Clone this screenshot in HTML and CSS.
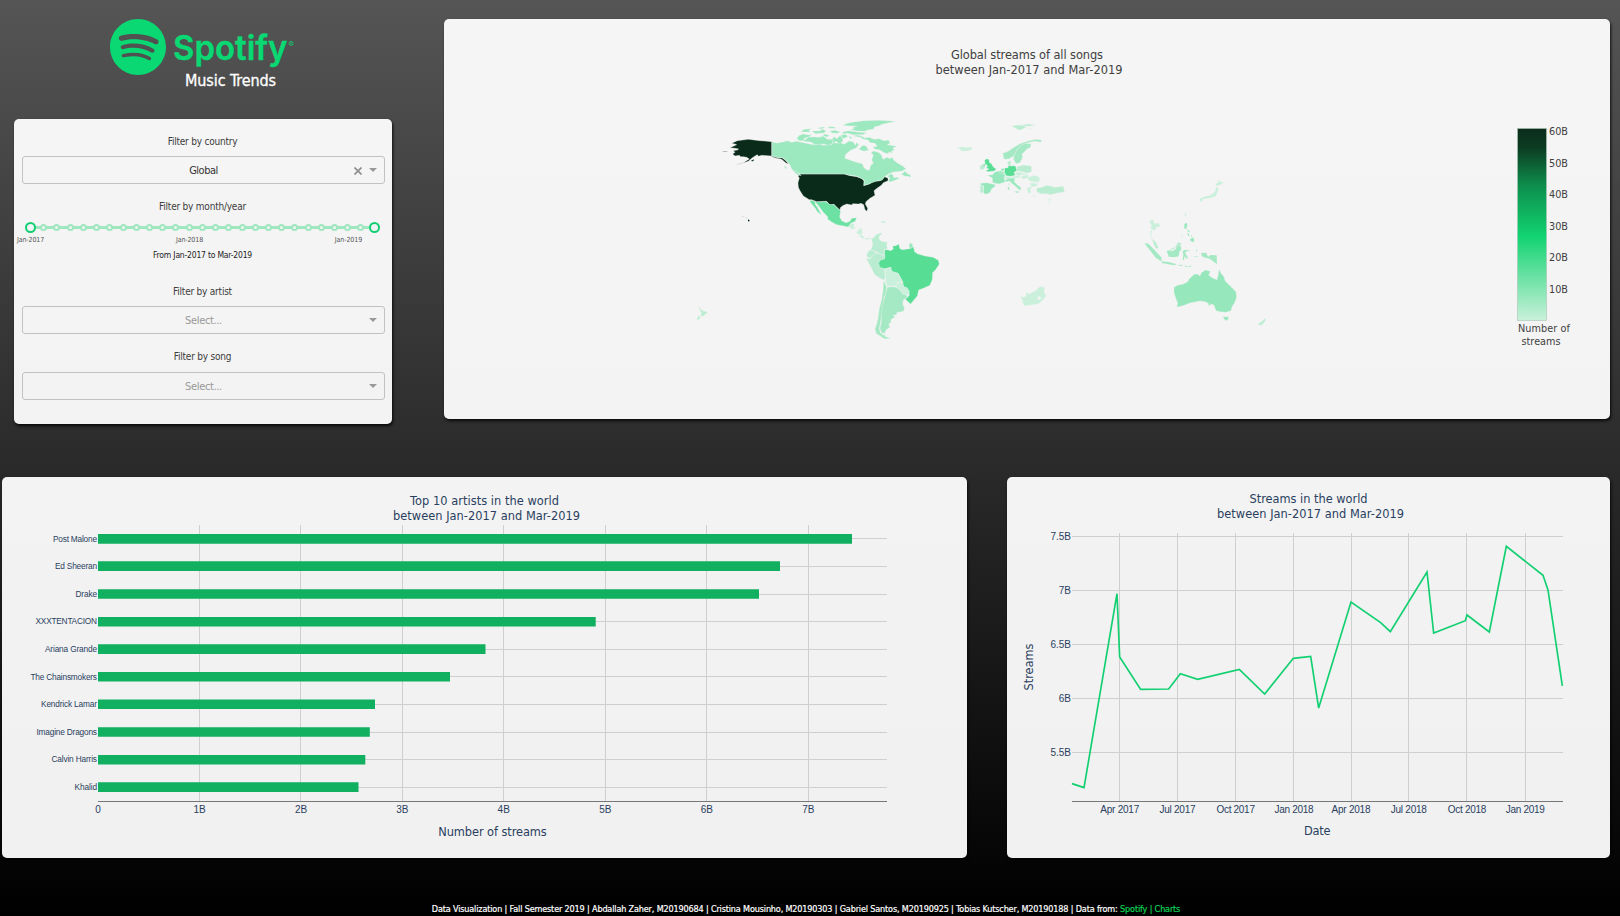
FILE: index.html
```html
<!DOCTYPE html>
<html lang="en">
<head>
<meta charset="utf-8">
<title>Spotify Music Trends</title>
<link rel="stylesheet" href="styles.css">
</head>
<body>
<div class="page">
  <div class="top">
    <aside class="side">
      <header class="brand">
        <svg class="logo" viewBox="110 19 190 56" width="190" height="56">
          <path class="green" transform="translate(110 19) scale(2.3333)" d="M12 0C5.4 0 0 5.4 0 12s5.4 12 12 12 12-5.4 12-12S18.66 0 12 0zm5.521 17.34c-.24.359-.66.48-1.021.24-2.82-1.74-6.36-2.101-10.561-1.141-.418.122-.779-.179-.899-.539-.12-.421.18-.78.54-.9 4.56-1.021 8.52-.6 11.64 1.32.42.18.479.659.301 1.02zm1.44-3.3c-.301.42-.841.6-1.262.3-3.239-1.98-8.159-2.58-11.939-1.38-.479.12-1.02-.12-1.14-.6-.12-.48.12-1.021.6-1.141C9.6 9.9 15 10.561 18.72 12.84c.361.181.54.78.241 1.2zm.12-3.36C15.24 8.4 8.82 8.16 5.16 9.301c-.6.179-1.2-.181-1.38-.721-.18-.601.18-1.2.72-1.381 4.26-1.26 11.28-1.02 15.721 1.621.539.3.719 1.02.419 1.56-.299.421-1.02.599-1.559.3z"/>
          <text class="wordmark" x="173" y="59.6" textLength="114.5" lengthAdjust="spacingAndGlyphs">Spotify</text>
          <text class="reg" x="288.5" y="46.5">®</text>
        </svg>
        <h1 class="subtitle">Music Trends</h1>
      </header>
      <section class="panel filters">
        <label class="label">Filter by country</label>
        <div class="select"><span class="value">Global</span>
          <svg class="clear" viewBox="0 0 8 8" width="8" height="8"><path d="M.5.5l7 7M7.5.5l-7 7"/></svg>
          <i class="caret"></i></div>
        <label class="label month">Filter by month/year</label>
        <div class="slider">
          <div class="rail"></div>
          <div class="dots"><i class="end"></i><i></i><i></i><i></i><i></i><i></i><i></i><i></i><i></i><i></i><i></i><i></i><i></i><i></i><i></i><i></i><i></i><i></i><i></i><i></i><i></i><i></i><i></i><i></i><i></i><i></i><i class="end"></i></div>
          <div class="marks"><span>Jan-2017</span><span>Jan-2018</span><span>Jan-2019</span></div>
        </div>
        <p class="range">From Jan-2017 to Mar-2019</p>
        <label class="label artist">Filter by artist</label>
        <div class="select"><span class="value empty">Select...</span><i class="caret"></i></div>
        <label class="label song">Filter by song</label>
        <div class="select"><span class="value empty">Select...</span><i class="caret"></i></div>
      </section>
    </aside>

    <section class="panel map">
      <svg viewBox="444 19 1166 400" width="1166" height="400">
        <defs><linearGradient id="scale" x1="0" y1="1" x2="0" y2="0">
          <stop offset="0" stop-color="#c9f1da"/><stop offset=".44" stop-color="#11d371"/><stop offset=".7" stop-color="#0d8f4d"/><stop offset=".9" stop-color="#0c3c22"/><stop offset="1" stop-color="#0b2c1a"/>
        </linearGradient></defs>
        <g class="title dark">
          <text x="1027" y="59" textLength="152">Global streams of all songs</text>
          <text x="1029" y="74" textLength="187">between Jan-2017 and Mar-2019</text>
        </g>
        <g class="land" transform="translate(680 100) scale(.33333)">
          <path class="c9" d="M275,125L240,122 222,120 205,118 188,120 172,122 155,130 165,132 170,134 160,139 150,143 165,145 176,147 172,150 160,152 165,157 158,162 165,168 178,166 182,170 190,170 200,172 208,177 190,188 163,196 182,191 205,184 215,175 225,168 232,164 236,169 245,166 275,168 290,172 298,174 306,173 316,181 326,192 318,189 305,178 290,175 275,170Z"/>
          <path class="c9 islet" d="M128,153.5h14v1.2h-14zM212,183l10,-5 -2,6zM204,358l5,3 -2,4 -3,-2zM187,349l3,1 -1,1zM196,353l4,1 -1,1z"/>
          <path class="c9" d="M357,226L362,222 493,222 510,227 530,230 546,236 552,243 551,257 568,252 580,244 596,243 606,240 614,230 624,235 624,242 610,248 604,256 592,264 582,272 585,286 570,295 558,305 556,312 563,325 561,334 555,329 551,314 543,310 536,312 518,311 516,315 500,312 488,317 481,323 480,331 470,321 462,313 450,315 440,304 410,305 395,299 388,299 370,288 360,272 355,262 354,248 358,234 354,228Z"/>
          <path class="c4" d="M276,125L290,129 308,126 322,122 335,127 350,124 370,128 385,131 400,134 420,132 430,136 455,133 462,127 470,130 480,127 492,133 508,123 520,126 526,136 530,127 536,135 528,145 515,149 505,156 496,165 495,175 508,179 520,184 530,187 547,191 552,203 562,211 568,210 572,196 580,190 575,180 580,166 573,157 582,153 598,158 604,165 609,178 622,172 630,176 636,171 643,182 654,190 668,198 678,207 665,214 640,216 626,222 614,230 606,240 590,243 568,251 552,256 553,241 546,236 530,228 510,226 493,222 362,222 350,217 335,208 330,195 318,181 306,172 298,174 276,168Z"/>
          <path class="c4" d="M336,210l12,4 16,13 -12,-3zM312,196l6,4 2,8 -5,-4zM622,228l12,-7 6,6 0,6 10,-1 9,3 -12,5 -16,6 -6,-4 5,-8zM664,222l12,-8 6,7 9,3 2,8 -10,-3 -8,0zM350,115l8,-9 12,-4 18,3 8,-2 -8,8 -14,3 -4,8 -12,0zM368,124l20,-14 30,2 12,-4 12,10 18,0 -2,12 -12,6 -16,-4 -24,2 -14,-8zM455,118l8,-8 8,6 8,-9 8,3 2,14 -12,8 -8,-8 -10,4zM518,108l14,-3 14,4 8,5 14,-2 14,6 16,-2 14,6 14,-2 4,10 -8,4 28,5 -12,6 6,6 -10,2 4,6 -14,-3 4,6 -16,-4 -12,-8 -14,-2 -8,-6 14,-4 -8,-8 -14,-2 -6,-8 -14,-2 -8,-6zM536,148l12,-12 10,2 8,12 -14,4zM488,76l14,-6 20,-4 30,-4 44,-1 52,3 -24,5 -18,4 -10,5 -12,2 -4,8 -16,2 -10,4 -22,-1 -20,-4 12,-5 -8,-3 16,-3 -24,0zM488,96l18,-4 26,4 28,2 -12,6 -30,0 -14,-4 -16,1zM362,96l10,-8 22,-2 -8,6 6,4zM396,93l22,0 10,-5 10,4 -6,7 -26,2zM412,84l18,-3 6,2 -14,4zM442,80l18,0 10,5 -20,0zM450,93l14,-2 16,4 -6,5 -18,-1zM482,106l14,-3 8,6 -10,6 -10,-2zM506,109l10,3 -4,6zM426,106l10,-4 14,5 -10,4z"/>
          <path class="c6" d="M390,300L410,306 438,305 448,313 462,314 472,324 482,332 479,350 485,362 498,368 510,364 515,355 530,353 526,364 512,370 505,381 490,378 470,374 455,366 443,358 443,350 430,337 416,318 406,306 405,312 412,322 418,333 424,345 412,335 407,326 400,318 392,308Z"/>
          <path class="c1" d="M505,380l10,-10 8,2 -2,8 6,4 -10,4zM529,398l8,-10 8,-4 3,18 -12,2zM534,404l14,2 8,11 -12,-4zM553,416l10,-3 10,0 4,6 -10,-3 -8,3zM603,363l10,0 6,5 -14,1z"/>
          <path class="c2" d="M575,416L582,412 588,404 602,398 606,402 598,408 597,416 604,424 622,427 620,436 623,445 612,450 614,466 600,462 588,455 572,450 578,435Z"/>
          <path class="c2" d="M565,453L572,450 588,455 583,464 570,474 562,472 560,464Z"/>
          <path class="c2" d="M558,475L570,476 588,458 604,463 612,468 614,478 600,482 595,493 605,504 614,506 615,530 612,541 600,535 584,524 576,508 568,493Z"/>
          <path class="c7" d="M614,450L622,449 632,452 640,447 638,438 648,437 656,432 660,446 668,449 688,446 700,440 704,455 712,461 735,468 760,472 775,481 778,492 768,508 758,518 757,538 750,556 730,565 716,570 712,588 692,612 676,598 688,586 686,575 670,560 668,545 660,530 652,520 635,515 632,502 614,506 600,502 595,490 602,480 614,477Z"/>
          <path class="c4" d="M688,430l8,0 3,9 -9,8 -3,-8z"/>
          <path class="c1" d="M616,508L632,502 635,514 655,520 660,532 668,545 652,548 646,560 636,558 622,560 616,545Z"/>
          <path class="c1" d="M648,551L660,546 668,548 671,560 680,562 688,573 686,584 672,586 664,572 650,564Z"/>
          <path class="c3" d="M611,540L620,562 618,580 612,592 611,610 606,640 602,665 598,685 601,699 615,706 618,712 600,708 588,700 585,686 590,672 594,655 598,625 605,600 609,570Z"/>
          <path class="c3" d="M622,562L636,560 648,562 664,574 668,582 680,585 682,592 670,600 668,612 674,625 670,634 650,638 650,645 640,645 645,652 634,658 632,668 626,672 630,682 618,690 614,700 604,698 600,685 604,665 604,645 608,615 613,595Z"/>
          <path class="c3" d="M608,706l10,4 14,5 -16,2 -14,-6z"/>
          <path class="c2" d="M54,618l14,14 15,4 -13,13 -8,-1 2,-9zM50,661l4,-12 9,0 -5,9z"/>
        </g>
        <g class="land" transform="translate(940 100) scale(.33333)">
          <path class="c2" d="M214,78l22,-3 16,2 8,4 -12,6 -10,4 -12,-7zM242,75l22,-3 24,3 -22,4zM262,86l10,-2 2,2z"/>
          <path class="c1" d="M50,143l12,-3 14,2 18,0 3,6 -12,4 -16,2 -12,-4 6,-2z"/>
          <path class="c3" d="M188,160L204,154 222,142 240,131 265,122 290,118 306,121 302,127 285,124 262,128 245,136 232,148 222,168 206,177 192,178Z"/>
          <path class="c3" d="M222,168L228,154 242,137 255,130 273,131 272,142 260,148 251,158 246,162 248,172 240,188 228,191 220,178Z"/>
          <path class="c7" d="M134,181l6,-5 8,3 -1,7 8,6 5,9 9,6 -6,6 -20,2 -5,-3 9,-5 -8,-3 4,-7 -8,-5zM126,194l8,-2 2,6 -6,2z"/>
          <path class="c2" d="M119,198l8,-4 8,6 -2,6 -12,4z"/>
          <path class="c5" d="M142,226L158,224 162,218 172,213 180,217 196,224 193,236 196,246 184,250 176,252 158,248 157,234Z"/>
          <path class="c5" d="M122,250L140,248 166,254 164,260 155,266 150,278 136,283 130,277 131,258 122,256Z"/>
          <path class="c2" d="M121,256L130,258 129,278 120,278Z"/>
          <path class="c7" d="M194,204L204,203 206,195 214,198 226,197 231,212 222,217 226,226 212,229 199,227 193,218Z"/>
          <path class="c5" d="M172,213l12,-1 9,8 -4,3zM182,208l10,-4 0,8 -8,2z"/>
          <path class="c2" d="M202,185l10,-3 1,8 -3,6 -7,-2zM214,192l6,-1 0,4zM231,200L250,195 274,198 275,215 262,220 248,216 231,212Z"/>
          <path class="c1" d="M224,218l12,-3 14,5 -6,6 -12,2zM242,230l18,-6 8,3 -8,8 -12,2zM263,232l20,-6 14,4 3,8 -4,9 -20,-1 -12,-7zM270,249l22,1 -2,9 -16,2zM192,230l18,-1 6,4 -10,4 -13,-1zM212,230l26,-3 2,6 -20,2zM246,220l16,2 -2,3 -14,0z"/>
          <path class="c4" d="M196,239l12,-4 12,-1 6,4 -4,6 10,10 12,9 -3,9 -5,-4 -10,-9 -12,-10 -6,-6 -10,3zM222,275l14,-2 -1,7zM203,261l5,0 0,8 -4,2zM204,252l4,-2 0,7z"/>
          <path class="c1" d="M261,264l12,-4 2,6 -5,2 4,8 -6,6 -6,-8zM272,286l16,1 -2,3zM325,298l8,-3 -3,8 -2,9 -2,-2 2,-7z"/>
          <path class="c2" d="M290,264L300,263 322,256 344,262 370,259 374,276 352,279 332,284 318,281 302,281 290,276Z"/>
          <path class="c1" fill-rule="evenodd" d="M240,588L250,592 258,588 259,573 266,583 276,577 288,572 294,563 306,559 313,564 313,580 319,585 310,599 295,612 275,615 255,618 249,612 248,602ZM292,594l6,-5 6,4 -6,7z"/>
          <path class="c1 islet" d="M826,252l8,-4 3,-8 5,6 10,1 -8,5 -6,3 -6,3zM828,262l6,1 0,8 -4,12 -4,6 -14,4 -10,2 -12,2 -4,7 -6,1 -2,-7 14,-8 20,-4 8,-6 6,-6z"/>
          <path class="c1" d="M627,364l8,-5 6,2 3,10 11,-3 7,11 -9,3 -6,1 0,8 -6,0 -9,-5 2,-12zM632,390l4,4 -3,14 6,10 -4,0 -5,-10zM722,412l10,-10 -8,13z"/>
          <path class="c2" d="M636,417l6,4 6,6 8,17 -6,3 -6,-8 -4,-10zM690,448l16,-8 8,-14 12,4 -6,7 -14,5 -4,6 -10,3zM733,345l6,-9 -1,11z"/>
          <path class="c3 islet" d="M613,430l12,1 18,18 22,24 -1,11 -16,-10 -16,-20zM664,484l22,2 24,7 -8,3 -36,-7zM680,452l8,-1 10,3 10,-8 2,-7 12,-2 2,12 -6,6 -2,14 -14,3 -16,-2zM728,454l4,-4 18,1 -14,5 0,4 8,14 -4,2 -6,-8 -2,12 -4,0 2,-14zM716,494l12,1 0,2 -12,0zM732,496l14,5 -8,0zM744,498l12,-1 -6,4zM768,448l4,3 -2,6zM762,469l16,1 -14,2zM784,459l14,-1 6,12 8,-5 18,1 1,27 -12,-9 -10,-8 -14,-3 -10,-5z"/>
          <path class="c4 islet" d="M733,372l7,-4 2,8 -3,10 -6,0zM740,388l8,4 2,5 -5,-2zM742,400l4,0 2,8 -4,-1zM752,404l4,4 -2,4zM750,418l10,-6 3,10 -5,5 -6,-4z"/>
          <path class="c5" d="M702,562L712,556 730,552 743,545 748,536 758,527 764,522 774,523 780,528 784,518 796,510 811,514 806,526 818,534 831,539 834,528 837,507 843,520 852,530 856,544 869,556 876,563 888,575 890,592 884,608 876,620 873,632 858,637 840,635 828,632 822,616 815,612 806,618 805,610 795,605 780,603 750,609 735,615 718,620 710,620 713,610 707,594 702,578Z"/>
          <path class="c5" d="M849,649l8,2 9,-1 -2,9 -6,3 -6,-5z"/>
          <path class="c2" d="M953,672l12,-7 10,-10 2,4 -4,8 -8,9 -8,-1z"/>
        </g>
        <rect class="colorbar" x="1517.5" y="128.5" width="29" height="192" fill="url(#scale)"/>
        <g class="ticks verdana">
          <text x="1549" y="135">60B</text><text x="1549" y="167">50B</text><text x="1549" y="198">40B</text><text x="1549" y="230">30B</text><text x="1549" y="261">20B</text><text x="1549" y="293">10B</text>
          <text x="1518" y="332" textLength="52">Number of</text><text x="1521.5" y="345" textLength="39">streams</text>
        </g>
      </svg>
    </section>
  </div>

  <div class="bottom">
    <section class="panel bars">
      <svg viewBox="2 477 965 381" width="965" height="381">
        <g class="title">
          <text x="484.5" y="505" textLength="149">Top 10 artists in the world</text>
          <text x="486.5" y="520" textLength="187">between Jan-2017 and Mar-2019</text>
          <text x="492.5" y="836.3" textLength="108.5">Number of streams</text>
        </g>
        <path class="grid" d="M199.5,525v276M300.5,525v276M402.5,525v276M503.5,525v276M605.5,525v276M706.5,525v276M808.5,525v276M98,538.5h789M98,566.5h789M98,594.5h789M98,621.5h789M98,649.5h789M98,676.5h789M98,704.5h789M98,732.5h789M98,759.5h789M98,787.5h789"/>
        <path class="bar" d="M98,534h754v9.7H98zM98,561.3h682v9.7H98zM98,589.2h661v9.6H98zM98,617h497.7v9.5H98zM98,644.2h387.5v9.7H98zM98,672h352v9.6H98zM98,699.4h277v9.6H98zM98,727.2h271.8v9.6H98zM98,755h267.3v9.5H98zM98,782.3h260.5v9.7H98z"/>
        <path class="axis" d="M98,801.5h789"/>
        <g class="names">
          <text x="97" y="542" textLength="44">Post Malone</text><text x="97" y="569.3" textLength="42">Ed Sheeran</text><text x="97" y="597" textLength="21.5">Drake</text><text x="97" y="624.3" textLength="61.5">XXXTENTACION</text><text x="97" y="652.2" textLength="52">Ariana Grande</text><text x="97" y="680" textLength="66.5">The Chainsmokers</text><text x="97" y="707.3" textLength="56">Kendrick Lamar</text><text x="97" y="735" textLength="60.5">Imagine Dragons</text><text x="97" y="762.3" textLength="45.5">Calvin Harris</text><text x="97" y="790" textLength="22.5">Khalid</text>
        </g>
        <g class="ticks mid">
          <text x="98" y="813">0</text><text x="199.5" y="813">1B</text><text x="301" y="813">2B</text><text x="402.3" y="813">3B</text><text x="503.7" y="813">4B</text><text x="605.3" y="813">5B</text><text x="706.8" y="813">6B</text><text x="808.3" y="813">7B</text>
        </g>
      </svg>
    </section>

    <section class="panel lines">
      <svg viewBox="1007 477 603 381" width="603" height="381">
        <g class="title">
          <text x="1308.5" y="503" textLength="118">Streams in the world</text>
          <text x="1310.5" y="518" textLength="187">between Jan-2017 and Mar-2019</text>
          <text x="1317.3" y="835.2" textLength="26.5">Date</text>
          <text transform="translate(1033 667) rotate(-90)" textLength="47">Streams</text>
        </g>
        <path class="grid" d="M1119.5,533v268M1177.5,533v268M1235.5,533v268M1293.5,533v268M1351.5,533v268M1408.5,533v268M1466.5,533v268M1525.5,533v268M1072,536.5h491M1072,590.5h491M1072,644.5h491M1072,698.5h491M1072,752.5h491"/>
        <path class="axis" d="M1072,801.5h491"/>
        <polyline class="trend" transform="translate(990 470) scale(.33333)" points="246,941 282,953 381,371 389,561 452,658 536,657 571,611 623,628 748,598 824,672 910,565 962,559 986,714 1083,396 1172,458 1201,485 1311,306 1331,489 1426,452 1431,435 1498,486 1549,229 1659,316 1674,360 1717,648"/>
        <g class="ticks mid">
          <text x="1119.7" y="813" textLength="39">Apr 2017</text><text x="1177.5" y="813" textLength="36">Jul 2017</text><text x="1235.7" y="813" textLength="38.5">Oct 2017</text><text x="1294" y="813" textLength="39">Jan 2018</text><text x="1351" y="813" textLength="39">Apr 2018</text><text x="1408.8" y="813" textLength="36">Jul 2018</text><text x="1467" y="813" textLength="38.5">Oct 2018</text><text x="1525.3" y="813" textLength="39">Jan 2019</text>
        </g>
        <g class="ticks last">
          <text x="1071" y="540">7.5B</text><text x="1071" y="594">7B</text><text x="1071" y="648">6.5B</text><text x="1071" y="702">6B</text><text x="1071" y="756">5.5B</text>
        </g>
      </svg>
    </section>
  </div>
  <footer class="credits">Data Visualization | Fall Semester 2019 | Abdallah Zaher, M20190684 | Cristina Mousinho, M20190303 | Gabriel Santos, M20190925 | Tobias Kutscher, M20190188 | Data from: <a>Spotify</a> <a>| Charts</a></footer>
</div>
</body>
</html>
```
FILE: styles.css
```css
* { box-sizing: border-box; }
body {
  margin: 0;
  font-family: "DejaVu Sans Condensed", "DejaVu Sans", sans-serif;
  font-stretch: condensed;
  color: #3c3c3c;
  background: #000;
}
.page {
  width: 1620px;
  height: 916px;
  overflow: hidden;
  background: linear-gradient(#555, #000);
}
.top { display: flex; height: 477px; padding: 19px 10px 0 14px; }
.side { width: 378px; margin-right: 52px; }
.brand { height: 100px; }
.logo { display: block; margin-left: 96px; overflow: visible; }
.green { fill: #09d873; }
.wordmark { font: 600 34px Inter, sans-serif; fill: #09d873; stroke: #09d873; stroke-width: .4; }
.reg { font: 8px Inter, sans-serif; fill: #09d873; }
.subtitle {
  margin: -4px 0 0 171px;
  font-size: 16px;
  line-height: 20px;
  font-weight: 400;
  letter-spacing: -.1px;
  color: #fff;
  -webkit-text-stroke: .3px #fff;
  white-space: nowrap;
}
.panel {
  background: rgba(255, 255, 255, .945);
  border-radius: 5px;
  box-shadow: 1px 2px 3px rgba(0, 0, 0, .8);
}
.panel > svg { display: block; }
.filters { height: 305px; padding: 16px 7px 0 8px; display: flex; flex-direction: column; }
.label {
  font-size: 10px;
  line-height: 14px;
  letter-spacing: -.22px;
  text-align: center;
  padding-right: 2px;
}
.label.month { margin-top: 16px; }
.label.artist { margin-top: 25px; }
.label.song { margin-top: 16px; }
.select {
  position: relative;
  height: 28px;
  margin-top: 7px;
  border: 1px solid #c2c2c2;
  border-radius: 3px;
  display: flex;
  align-items: center;
  justify-content: center;
}
.label.song + .select { margin-top: 8px; }
.value { font-size: 11px; letter-spacing: -.5px; color: #333; }
.value.empty { letter-spacing: -.35px; color: #999; }
.caret {
  position: absolute;
  right: 7px;
  top: 11px;
  border: 4px solid transparent;
  border-top-color: #999;
  border-bottom: 0;
}
.clear { position: absolute; right: 22px; top: 10px; stroke: #8e8e8e; stroke-width: 1.7; }
.slider { position: relative; height: 33px; padding-top: 7px; }
.rail { position: absolute; left: 8px; right: 10px; top: 12px; height: 3px; background: #9fe7bf; }
.dots { position: relative; display: flex; justify-content: space-between; align-items: center; height: 12px; margin: 0 5px 0 3px; }
.dots i { width: 7px; height: 7px; margin: 0 -1px; border: 2px solid #9fe7bf; border-radius: 50%; background: #f4f4f4; }
.dots .end { width: 11px; height: 11px; margin: 0 -3px; border-color: #12cf73; }
.dots .end:first-child { margin-left: 0; }
.dots .end:last-child { margin-right: 0; }
.marks { position: absolute; left: 8.5px; right: 10px; top: 21px; font-size: 7px; line-height: 10px; letter-spacing: -.1px; color: #555; }
.marks span { position: absolute; left: 0; transform: translateX(-50%); white-space: nowrap; }
.marks span:nth-child(2) { left: 46.15%; }
.marks span:nth-child(3) { left: 92.3%; }
.range { margin: 3px 2px 0 0; font-size: 8.5px; line-height: 10px; letter-spacing: -.2px; text-align: center; color: #222; }
.map { width: 1166px; height: 400px; }
.bottom { display: flex; justify-content: space-between; height: 381px; padding: 0 10px 0 2px; }
.bars { width: 965px; }
.lines { width: 603px; }

svg text { font-stretch: normal; }
.title { font: 11.4px "DejaVu Sans", sans-serif; fill: #2a3f5f; text-anchor: middle; }
.title.dark { fill: #404040; }
.ticks { font: 10px "Liberation Sans", sans-serif; fill: #2a3f5f; }
.ticks.verdana { font: 9.7px "DejaVu Sans", sans-serif; fill: #404040; }
.mid { text-anchor: middle; }
.last, .names { text-anchor: end; }
.names { font: 8.3px "Liberation Sans", sans-serif; fill: #2a3f5f; }
.grid { stroke: #cfcfcf; fill: none; }
.axis { stroke: #777; fill: none; }
.bar { fill: #10b060; }
.trend { fill: none; stroke: #12d071; stroke-width: 5; }
.colorbar { stroke: #a9c4b5; stroke-width: .6; }
.land path { stroke: #f4f4f4; stroke-width: 1; }
.land .islet { stroke: none; }
.c1 { fill: #caf0dc; }
.c2 { fill: #baecd1; }
.c3 { fill: #a5e9c4; }
.c4 { fill: #9ce8bf; }
.c5 { fill: #96e7bb; }
.c6 { fill: #6de1a3; }
.c7 { fill: #57dd94; }
.c9 { fill: #0a2b1a; }

.credits {
  margin-top: 44px;
  padding-right: 8px;
  font-size: 9px;
  line-height: 14px;
  letter-spacing: -.15px;
  text-align: center;
  white-space: nowrap;
  color: #fff;
  -webkit-text-stroke: .2px;
}
.credits a { color: #09d255; }
```
